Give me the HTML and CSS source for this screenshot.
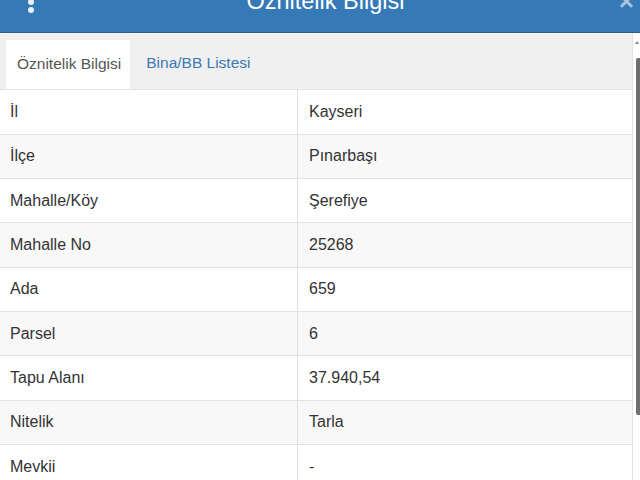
FILE: index.html
```html
<!DOCTYPE html>
<html lang="tr">
<head>
<meta charset="utf-8">
<link rel="stylesheet" href="styles.css">
</head>
<body>
<div class="page">
  <header class="header">
    <div class="header-inner">
      <span class="kebab"><i></i><i></i><i></i></span>
      <h1 class="title">Öznitelik Bilgisi</h1>
      <span class="close">×</span>
    </div>
  </header>
  <div class="body">
    <div class="content">
      <div class="tabs">
        <div class="tab active">Öznitelik Bilgisi</div>
        <div class="tab">Bina/BB Listesi</div>
      </div>
      <table class="attr">
        <tr><td>İl</td><td>Kayseri</td></tr>
        <tr><td>İlçe</td><td>Pınarbaşı</td></tr>
        <tr><td>Mahalle/Köy</td><td>Şerefiye</td></tr>
        <tr><td>Mahalle No</td><td>25268</td></tr>
        <tr><td>Ada</td><td>659</td></tr>
        <tr><td>Parsel</td><td>6</td></tr>
        <tr><td>Tapu Alanı</td><td>37.940,54</td></tr>
        <tr><td>Nitelik</td><td>Tarla</td></tr>
        <tr><td>Mevkii</td><td>-</td></tr>
      </table>
    </div>
    <div class="scrollbar">
      <span class="arrow"></span>
      <span class="thumb"></span>
    </div>
  </div>
</div>
</body>
</html>
```
FILE: styles.css
```css
html, body {
  margin: 0;
  padding: 0;
  background: #fff;
  overflow: hidden;
}
body {
  font-family: "Liberation Sans", Arial, sans-serif;
  color: #333;
}
.page {
  width: 640px;
  height: 480px;
  overflow: hidden;
}
.header {
  height: 32px;
  background: #3579b6;
  border-bottom: 1px solid #2b5d88;
  overflow: hidden;
}
.header-inner {
  display: flex;
  align-items: center;
  height: 40px;
  margin-top: -19px;
  padding: 0 6px 0 28px;
}
.kebab {
  display: flex;
  flex-direction: column;
  gap: 2px;
  width: 6px;
  margin-top: 2px;
}
.kebab i {
  display: block;
  width: 6px;
  height: 6px;
  border-radius: 50%;
  background: #e9f1f8;
}
.title {
  flex: 1;
  margin: 0;
  text-align: center;
  font-size: 23.5px;
  font-weight: normal;
  color: #fff;
  line-height: 40px;
  padding-right: 2px;
}
.close {
  font-size: 26px;
  font-weight: bold;
  color: #a9c3dc;
  line-height: 40px;
}
.body {
  display: flex;
  height: 447px;
}
.content {
  width: 632px;
  border-right: 1px solid #e3e3e3;
}
.tabs {
  display: flex;
  background: #f0f0f0;
  padding: 5px 0 0 5px;
  height: 50px;
  border-top: 1px solid #f6f6f6;
  border-bottom: 1px solid #e2e2e2;
}
.tab {
  padding: 0 12px 0 15px;
  line-height: 48px;
  font-size: 15.5px;
  color: #3b7ab4;
}
.tab.active {
  background: #fff;
  color: #555;
  border: 1px solid #ececec;
  border-bottom: none;
  padding: 0 9px 0 11px;
}
.attr {
  width: 100%;
  border-collapse: collapse;
  font-size: 16px;
  color: #333;
}
.attr tr {
  height: 44.3px;
}
.attr tr:nth-child(even) {
  background: #f8f8f8;
}
.attr td {
  border-bottom: 1px solid #e2e2e2;
  padding: 0 0 0 10px;
  vertical-align: middle;
}
.attr td:first-child {
  width: 287px;
  border-right: 1px solid #dedede;
}
.attr td + td {
  padding-left: 11px;
}
.scrollbar {
  position: relative;
  flex: 1;
  background: #fff;
}
.arrow {
  position: absolute;
  left: 2px;
  top: 8px;
  width: 0;
  height: 0;
  border-left: 2px solid transparent;
  border-right: 2px solid transparent;
  border-bottom: 3px solid #888;
}
.thumb {
  position: absolute;
  left: 3px;
  right: 0;
  top: 25px;
  height: 357px;
  background: #6f6f6f;
  border-radius: 2px 0 0 2px;
}
```
